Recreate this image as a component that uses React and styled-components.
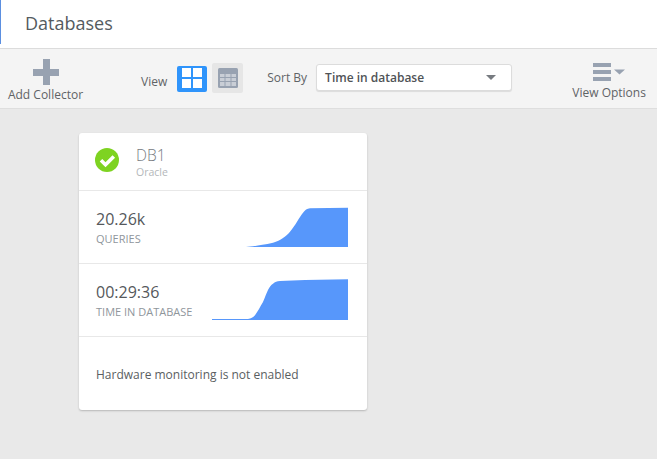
import React from "react";
import styled, { createGlobalStyle } from "styled-components";

const Global = createGlobalStyle`
  html, body { margin: 0; padding: 0; background: #e9e9e9; }
  body { font-family: "Open Sans", "Liberation Sans", sans-serif; color: #555; }
`;
const Page = styled.div`width: 657px; height: 459px; overflow: hidden; display: flex; flex-direction: column;`;
const Header = styled.header`
  height: 49px; flex: none; background: #fff; box-sizing: border-box; display: flex; align-items: center;
  padding-left: 25px; border-bottom: 1px solid #dcdcdc; position: relative;
  &::before { content: ""; position: absolute; left: 0; top: 0; width: 1px; height: 44px; background: #5b8fe0; }
`;
const Title = styled.h1`margin: 0 0 3px; font-size: 18px; font-weight: 400; color: #555b60; line-height: 24px;`;
const Toolbar = styled.div`
  height: 60px; flex: none; box-sizing: border-box; background: #f4f4f4; border-bottom: 1px solid #dedede; display: flex;
`;
const LabelledTool = styled.div`
  display: flex; flex-direction: column; align-items: center; flex: none; width: ${p => p.$w}px; margin-left: ${p => p.$ml}px;
  padding-top: ${p => p.$pt}px; box-sizing: border-box;
`;
const ToolLabel = styled.span`font-size: 12px; line-height: 16px; color: #5f6366; white-space: nowrap; margin-top: ${p => p.$mt || 0}px;`;
const Inline = styled.div`display: flex; align-items: center; margin-left: ${p => p.$ml}px; height: 59px; padding-bottom: ${p => p.$pb || 0}px; box-sizing: border-box;`;
const ViewBtn = styled.div`
  border-radius: 2px; display: flex; align-items: center; justify-content: center; margin-left: ${p => p.$ml}px;
  background: ${p => p.$active ? "#2f94fb" : "#e6e6e6"};
  height: ${p => p.$active ? 26 : 30}px; width: ${p => p.$active ? 30 : 31}px;
  margin-top: ${p => p.$active ? 0 : -1}px;
`;
const Select = styled.div`
  width: 196px; height: 27px; box-sizing: border-box; margin-left: 9px; background: #fff; border: 1px solid #dcdcdc; border-radius: 3px;
  box-shadow: 0 1px 1px rgba(0,0,0,.1); display: flex; align-items: center; justify-content: space-between; padding: 0 15px 0 8px;
  font-size: 12px; font-weight: 600; color: #4f5356;
`;
const Caret = styled.span`width: 0; height: 0; border-left: 5px solid transparent; border-right: 5px solid transparent; border-top: 5px solid #777b80;`;
const Content = styled.main`flex: 1; padding: 24px 0 0 79px;`;
const Card = styled.section`
  width: 288px; height: 277px; background: #fff; border-radius: 3px; box-shadow: 0 1px 2px rgba(0,0,0,.22); display: flex; flex-direction: column;
`;
const CardHead = styled.div`height: 58px; flex: none; box-sizing: border-box; border-bottom: 1px solid #e8e8e8; display: flex; align-items: center; padding-left: 16px; padding-bottom: 4px;`;
const HeadText = styled.div`margin: 4px 0 0 17px; display: flex; flex-direction: column;`;
const DbName = styled.div`font-size: 15.5px; line-height: 20px; color: #777b7f; font-weight: 300;`;
const DbType = styled.div`font-size: 10.5px; line-height: 14px; color: #b4b7ba;`;
const Metric = styled.div`
  height: 73px; flex: none; box-sizing: border-box; border-bottom: 1px solid #e8e8e8; display: flex; align-items: flex-start; justify-content: space-between; padding: 16px 19px 0 17px;
`;
const Value = styled.div`font-size: 16px; line-height: 24px; color: #55585b; white-space: nowrap;`;
const Caption = styled.div`font-size: 11px; line-height: 14px; color: #8f969c; white-space: nowrap; margin-top: 1px;`;
const Chart = styled.svg`display: block; flex: none; margin-top: ${p => p.$mt}px;`;
const Footer = styled.div`flex: 1; display: flex; align-items: center; padding: 2px 0 0 17px; font-size: 12px; color: #5a5e61;`;

export default function App() {
  return (
    <Page>
      <Global />
      <Header><Title>Databases</Title></Header>
      <Toolbar>
        <LabelledTool $w={75} $ml={8} $pt={10}>
          <svg width="27" height="26" viewBox="0 0 27 26" style={{ display: "block" }}>
            <path d="M11 0h7v10h9v7h-9v9h-7v-9H1v-7h10z" fill="#98a2b1" />
          </svg>
          <ToolLabel $mt={2}>Add Collector</ToolLabel>
        </LabelledTool>
        <Inline $ml={58}>
          <ToolLabel $mt={6}>View</ToolLabel>
          <ViewBtn $active $ml={10}>
            <svg width="20" height="22" viewBox="0 0 20 22">
              <path d="M0 0h9v9H0zM11 0h9v9h-9zM0 11h9v9H0zM11 11h9v9h-9z" fill="#fff" />
            </svg>
          </ViewBtn>
          <ViewBtn $ml={5}>
            <svg width="20" height="20" viewBox="0 0 20 20">
              <rect x="0" y="0" width="20" height="20" rx="1.5" fill="#98a2b1" />
              <path d="M2 6h4.5v3H2zM7.5 6h5v3h-5zM13.5 6H18v3h-4.5zM2 10h4.5v3H2zM7.5 10h5v3h-5zM13.5 10H18v3h-4.5zM2 14h4.5v4H2zM7.5 14h5v4h-5zM13.5 14H18v4h-4.5z" fill="#c9ced6" />
            </svg>
          </ViewBtn>
        </Inline>
        <Inline $ml={24} $pb={2}>
          <ToolLabel>Sort By</ToolLabel>
          <Select>Time in database<Caret /></Select>
        </Inline>
        <LabelledTool $w={76} $ml={59} $pt={14}>
          <svg width="32" height="18" viewBox="0 0 32 18" style={{ display: "block" }}>
            <path d="M0 0h18v4H0zM0 7h18v4H0zM0 14h18v4H0z" fill="#98a2b1" />
            <path d="M21 6.5h11l-5.5 5z" fill="#98a2b1" />
          </svg>
          <ToolLabel $mt={4}>View Options</ToolLabel>
        </LabelledTool>
      </Toolbar>
      <Content>
        <Card>
          <CardHead>
            <svg width="24" height="24" viewBox="0 0 24 24">
              <circle cx="12" cy="12" r="12" fill="#7ed321" />
              <path d="M6 12.3l4.5 4.4L18.8 8.4" fill="none" stroke="#fff" strokeWidth="3.6" />
            </svg>
            <HeadText>
              <DbName>DB1</DbName>
              <DbType>Oracle</DbType>
            </HeadText>
          </CardHead>
          <Metric>
            <div><Value>20.26k</Value><Caption>QUERIES</Caption></div>
            <Chart width="102" height="40" viewBox="0 0 102 40" $mt={0}>
              <path d="M0 40C5 39.7 14 38.5 27 35.7C31 34.5 34 33 37 31C40 29 42 27 44 24.7C47 21 49 18 51 14.7C53 11.5 55 8 57 5.7C59 3 61 1.5 64 1.2L102 0.7V40Z" fill="#5797fb" />
            </Chart>
          </Metric>
          <Metric>
            <div><Value>00:29:36</Value><Caption>TIME IN DATABASE</Caption></div>
            <Chart width="136" height="41" viewBox="0 0 136 41" $mt={-1}>
              <path d="M0 40H36C39 39.8 41 38.5 43 36.3C46 32 48 28 51 23C53 18.5 54 15 56 11C57.5 8 59 6 61 4.7C63 3 65 2.3 68 2L93 1L136 0.3V41H0Z" fill="#5797fb" />
            </Chart>
          </Metric>
          <Footer>Hardware monitoring is not enabled</Footer>
        </Card>
      </Content>
    </Page>
  );
}
